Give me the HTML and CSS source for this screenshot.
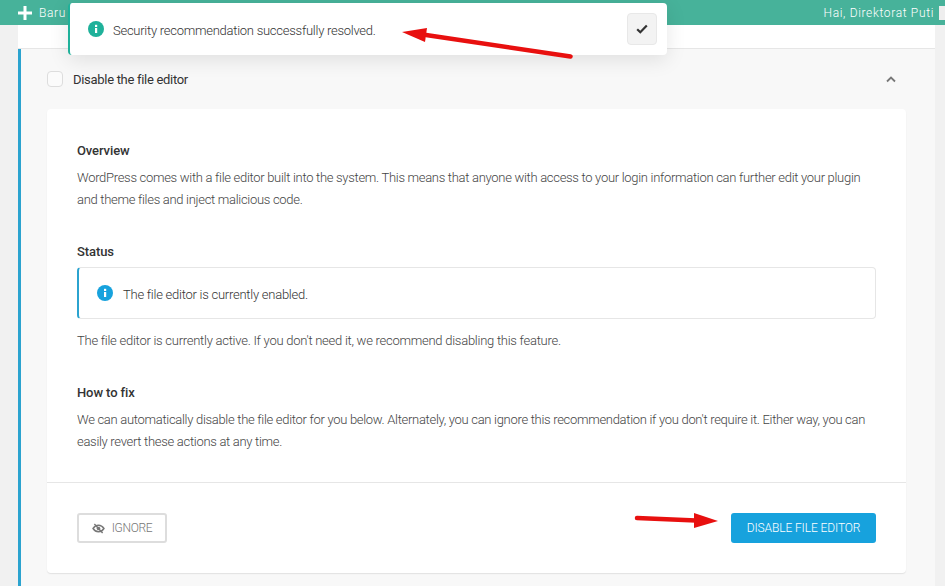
FILE: index.html
```html
<!DOCTYPE html>
<html lang="en">
<head>
<meta charset="utf-8">
<title>Security recommendation</title>
<link rel="stylesheet" href="styles.css">
</head>
<body>
<header class="adminbar">
  <div class="adminbar-new">
    <svg class="plus" width="14" height="14" viewBox="0 0 14 14"><path d="M5.500 0h3v5.500h5.500v3h-5.500v5.500h-3v-5.500h-5.500v-3h5.500z" fill="#fff"/></svg>
    <span>Baru</span>
  </div>
  <div class="adminbar-user"><span>Hai, Direktorat Puti</span><i class="avatar"></i></div>
</header>
<main class="wrap">
  <div class="strip"></div>
  <section class="rec">
    <div class="rec-head">
      <span class="checkbox"></span>
      <span class="rec-title">Disable the file editor</span>
      <svg class="chevron" width="10" height="7" viewBox="0 0 10 7"><path d="M1 5.500 5 1.500l4 4" fill="none" stroke="#777" stroke-width="1.800"/></svg>
    </div>
    <div class="card">
      <div class="card-body">
        <h3 class="heading">Overview</h3>
        <p class="para para-tight">WordPress comes with a file editor built into the system. This means that anyone with access to your login information can further edit your plugin and theme files and inject malicious code.</p>
        <h3 class="heading heading-status">Status</h3>
        <div class="notice">
          <svg class="info" width="16" height="16" viewBox="0 0 16 16"><circle cx="8" cy="8" r="8" fill="#17a2dd"/><rect x="7" y="7" width="2.200" height="5" fill="#fff"/><rect x="7" y="3.800" width="2.200" height="2.200" fill="#fff"/></svg>
          <span class="notice-text">The file editor is currently enabled.</span>
        </div>
        <p class="para para-status">The file editor is currently active. If you don't need it, we recommend disabling this feature.</p>
        <h3 class="heading heading-fix">How to fix</h3>
        <p class="para para-tight">We can automatically disable the file editor for you below. Alternately, you can ignore this recommendation if you don't require it. Either way, you can easily revert these actions at any time.</p>
      </div>
      <div class="card-foot">
        <button class="btn btn-ghost">
          <svg width="13" height="11" viewBox="0 0 14 12"><path d="M1 6c1.500-2.300 3.500-3.500 6-3.500S11.500 3.700 13 6c-1.500 2.300-3.500 3.500-6 3.500S2.500 8.300 1 6z" fill="none" stroke="#777" stroke-width="1.500"/><circle cx="7" cy="6" r="2" fill="#777"/><path d="M2.500 1 11.500 11" stroke="#777" stroke-width="1.500"/></svg>
          <span>IGNORE</span>
        </button>
        <button class="btn btn-primary">DISABLE FILE EDITOR</button>
      </div>
    </div>
  </section>
</main>
<aside class="toast">
  <svg class="info" width="16" height="16" viewBox="0 0 16 16"><circle cx="8" cy="8" r="8" fill="#1fb19a"/><rect x="7" y="7" width="2.200" height="5" fill="#fff"/><rect x="7" y="3.800" width="2.200" height="2.200" fill="#fff"/></svg>
  <span class="toast-text">Security recommendation successfully resolved.</span>
  <button class="toast-close"><svg width="12" height="10" viewBox="0 0 12 10"><path d="M1.200 5.200 4.300 8.200 10.800 1.500" fill="none" stroke="#333" stroke-width="2.200"/></svg></button>
</aside>
<svg class="arrow arrow-top" width="175" height="36" viewBox="0 0 175 36"><path d="M26 9 170.500 30.500" stroke="#e8100f" stroke-width="4.500" stroke-linecap="round"/><path d="M2 6 27 2 25 16z" fill="#e8100f"/></svg>
<svg class="arrow arrow-bottom" width="90" height="22" viewBox="0 0 90 22"><path d="M3 8 62 10.500" stroke="#e8100f" stroke-width="4.500" stroke-linecap="round"/><path d="M60 3 84 11 60 18z" fill="#e8100f"/></svg>
</body>
</html>
```
FILE: styles.css
```css
* { box-sizing: border-box; }
html, body { margin: 0; padding: 0; }
body {
  width: 945px;
  height: 586px;
  overflow: hidden;
  background: #f1f1f1;
  font-family: Roboto, "Liberation Sans", sans-serif;
  font-size: 13px;
  color: #555;
  position: relative;
}
.adminbar {
  height: 25px;
  background: #47b29a;
  color: #fff;
  display: flex;
  justify-content: space-between;
  align-items: center;
  font-size: 12px;
  font-weight: 300;
  letter-spacing: 0.65px;
}
.adminbar-new { display: flex; align-items: center; gap: 7px; padding-left: 18px; }
.adminbar-user { display: flex; align-items: center; gap: 5px; }
.avatar { display: block; width: 6px; height: 14px; background: #eee; }
.wrap { margin: 0 10px 0 18px; }
.strip { height: 24px; background: #fff; border-bottom: 1px solid #e6e6e6; }
.rec {
  background: #f8f8f8;
  border-left: 3px solid #2ba3cf;
  padding: 0 29px 0 26px;
  height: 537px;
}
.rec-head { height: 60px; display: flex; align-items: center; }
.checkbox { width: 16px; height: 16px; border: 1px solid #ddd; border-radius: 4px; background: #fbfbfb; margin-right: 10px; }
.rec-title { font-size: 13px; letter-spacing: -0.3px; color: #333; flex: 1; }
.chevron { margin-right: 10px; }
.card { background: #fff; border-radius: 4px; box-shadow: 0 1px 1px #e2e2e2; }
.card-body { padding: 33px 30px 23px; height: 373px; }
.heading { margin: 0 0 7px; font-size: 13px; font-weight: 500; line-height: 18px; color: #333; letter-spacing: -0.1px; }
.heading-status { margin-top: 32px; margin-bottom: 6px; }
.heading-fix { margin-top: 32px; margin-bottom: 7px; }
.para { margin: 0; font-size: 13px; font-weight: 300; line-height: 22px; color: #444; letter-spacing: -0.26px; }
.para-tight { letter-spacing: -0.3px; }
.para-status { margin-top: 11px; }
.notice {
  height: 52px;
  border: 1px solid #e6e6e6;
  border-left: 2px solid #2ba3cf;
  border-radius: 4px;
  display: flex;
  align-items: center;
  gap: 10px;
  padding-left: 18px;
  font-weight: 300;
  color: #333;
  letter-spacing: -0.25px;
}
.notice-text { padding-top: 2px; }
.card-foot {
  border-top: 1px solid #e6e6e6;
  height: 91px;
  padding: 30px;
  display: flex;
  justify-content: space-between;
}
.btn {
  height: 30px;
  font-family: inherit;
  font-size: 12px;
  border-radius: 3px;
  display: flex;
  align-items: center;
  justify-content: center;
}
.btn-ghost { width: 90px; background: #fff; border: 2px solid #ddd; color: #777; gap: 7px; font-weight: 300; letter-spacing: -0.3px; }
.btn-primary { width: 145px; background: #17a2dd; border: 0; color: #fff; font-weight: 300; letter-spacing: -0.1px; }
.toast {
  position: absolute;
  left: 68px;
  top: 3px;
  width: 599px;
  height: 52px;
  background: #fff;
  border-left: 2px solid #1fb19a;
  border-radius: 4px;
  box-shadow: 0 5px 20px rgba(0,0,0,0.1);
  display: flex;
  align-items: center;
  padding: 0 10px 0 18px;
  gap: 10px;
}
.toast-text { flex: 1; font-weight: 300; color: #333; font-size: 13px; letter-spacing: -0.26px; padding-top: 2px; margin-left: -1px; }
.toast-close { width: 30px; height: 32px; background: #f3f3f3; border: 1px solid #e8e8e8; border-radius: 4px; padding: 0; display: flex; align-items: center; justify-content: center; }
.arrow { position: absolute; }
.arrow-top { left: 400px; top: 26px; }
.arrow-bottom { left: 634px; top: 510px; }
```
